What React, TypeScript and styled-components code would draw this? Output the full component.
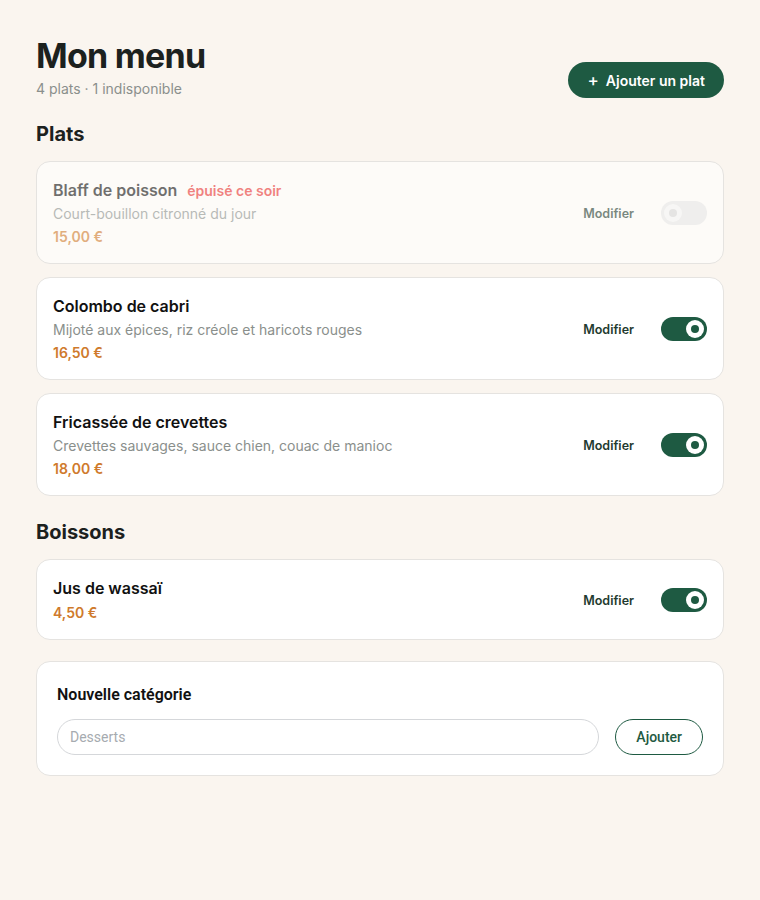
import React, { useState } from 'react'
import styled, { createGlobalStyle } from 'styled-components'

const GlobalStyle = createGlobalStyle`
    body {
        margin: 0;
        background: #faf5ef;
        font-family: Inter, "Noto Sans", sans-serif;
        color: #1c211e;
    }
`

const StyledPage = styled.div`
    padding: 36px 36px 40px;
    display: flex;
    flex-direction: column;
`

const StyledHeader = styled.div`
    display: flex;
    flex-direction: row;
    justify-content: space-between;
    align-items: flex-end;
`

const StyledTitle = styled.h1`
    margin: 0;
    font-size: 34px;
    line-height: 40px;
    font-weight: 700;
    letter-spacing: -0.75px;
    color: #1c211e;
`

const StyledSubtitle = styled.div`
    margin-top: 4px;
    font-size: 14px;
    line-height: 18px;
    color: #8a8f8c;
`

const StyledAddButton = styled.button`
    height: 36px;
    padding: 0 19px;
    border: none;
    border-radius: 18px;
    background: #1e5a42;
    color: #ffffff;
    font-family: Inter, sans-serif;
    font-size: 14px;
    font-weight: 600;
    display: flex;
    align-items: center;
    gap: 7px;
    cursor: pointer;
`

const StyledSectionTitle = styled.h2`
    margin: 24px 0 15px;
    font-size: 20px;
    line-height: 24px;
    font-weight: 700;
    color: #1c211e;
`

const StyledList = styled.div`
    display: flex;
    flex-direction: column;
    gap: 13px;
`

const StyledCard = styled.div<{ $off?: boolean }>`
    display: flex;
    flex-direction: row;
    align-items: center;
    padding: 17px 16px 16px;
    border: 1px solid #e5e3e0;
    border-radius: 14px;
    background: ${p => (p.$off ? '#fdfbf8' : '#ffffff')};
`

const StyledInfo = styled.div<{ $off?: boolean }>`
    flex: 1;
    display: flex;
    flex-direction: column;
    opacity: ${p => (p.$off ? 0.6 : 1)};
`

const StyledNameRow = styled.div`
    display: flex;
    align-items: baseline;
    gap: 10px;
    line-height: 23px;
`

const StyledName = styled.div`
    font-size: 16px;
    font-weight: 600;
    color: #111111;
`

const StyledBadge = styled.span`
    font-size: 14px;
    font-weight: 600;
    color: #e8312f;
`

const StyledDesc = styled.div`
    margin-top: 2px;
    font-size: 14px;
    line-height: 20px;
    color: #8a8f8c;
`

const StyledPrice = styled.div`
    margin-top: 3px;
    font-size: 14px;
    line-height: 20px;
    font-weight: 600;
    color: #cf7a2c;
`

const StyledActions = styled.div<{ $off?: boolean }>`
    display: flex;
    align-items: center;
    gap: 27px;
    opacity: ${p => (p.$off ? 0.6 : 1)};
`

const StyledEdit = styled.button`
    border: none;
    background: none;
    padding: 0;
    font-family: Inter, sans-serif;
    font-size: 12.5px;
    font-weight: 600;
    color: #1f3b30;
    cursor: pointer;
`

const StyledToggle = styled.button<{ $on: boolean }>`
    position: relative;
    width: 46px;
    height: 24px;
    border: none;
    padding: 0;
    border-radius: 12px;
    background: ${p => (p.$on ? '#1e5a42' : '#e6e6e6')};
    cursor: pointer;
`

const StyledKnob = styled.span<{ $on: boolean }>`
    position: absolute;
    top: 3px;
    left: ${p => (p.$on ? '25px' : '3px')};
    width: 18px;
    height: 18px;
    border-radius: 50%;
    background: ${p => (p.$on ? '#ffffff' : '#f4f4f4')};
    display: flex;
    align-items: center;
    justify-content: center;
    &::after {
        content: '';
        width: 8px;
        height: 8px;
        border-radius: 50%;
        background: ${p => (p.$on ? '#1e5a42' : '#d6d6d6')};
    }
`

const StyledNewCard = styled.div`
    margin-top: 21px;
    padding: 23px 20px 20px 20px;
    border: 1px solid #e5e3e0;
    border-radius: 14px;
    background: #ffffff;
    font-family: Roboto, sans-serif;
`

const StyledNewTitle = styled.div`
    font-size: 16px;
    font-weight: 600;
    color: #111111;
    line-height: 20px;
`

const StyledForm = styled.div`
    margin-top: 14px;
    display: flex;
    align-items: center;
    gap: 16px;
`

const StyledInput = styled.input`
    flex: 1;
    height: 36px;
    box-sizing: border-box;
    padding: 0 12px;
    border: 1px solid #d5d7da;
    border-radius: 18px;
    font-family: Roboto, sans-serif;
    font-size: 14px;
    outline: none;
    &::placeholder {
        color: #a6abb0;
    }
`

const StyledOutlineButton = styled.button`
    height: 36px;
    padding: 0 20px;
    border: 1px solid #1e5a42;
    border-radius: 18px;
    background: #ffffff;
    color: #1e5a42;
    font-family: Roboto, sans-serif;
    font-size: 14px;
    font-weight: 500;
    cursor: pointer;
`

interface Dish {
    name: string
    desc?: string
    price: string
    on: boolean
}

const plats: Dish[] = [
    { name: 'Blaff de poisson', desc: 'Court-bouillon citronné du jour', price: '15,00 €', on: false },
    { name: 'Colombo de cabri', desc: 'Mijoté aux épices, riz créole et haricots rouges', price: '16,50 €', on: true },
    { name: 'Fricassée de crevettes', desc: 'Crevettes sauvages, sauce chien, couac de manioc', price: '18,00 €', on: true },
]

const boissons: Dish[] = [{ name: 'Jus de wassaï', price: '4,50 €', on: true }]

const DishItem = (props: { dish: Dish }) => {
    const [on, setOn] = useState(props.dish.on)
    const off = !on
    return (
        <StyledCard $off={off}>
            <StyledInfo $off={off}>
                <StyledNameRow>
                    <StyledName>{props.dish.name}</StyledName>
                    {off && <StyledBadge>épuisé ce soir</StyledBadge>}
                </StyledNameRow>
                {props.dish.desc && <StyledDesc>{props.dish.desc}</StyledDesc>}
                <StyledPrice>{props.dish.price}</StyledPrice>
            </StyledInfo>
            <StyledActions $off={off}>
                <StyledEdit>Modifier</StyledEdit>
                <StyledToggle $on={on} onClick={() => setOn(!on)}>
                    <StyledKnob $on={on} />
                </StyledToggle>
            </StyledActions>
        </StyledCard>
    )
}

const App = () => {
    return (
        <>
            <GlobalStyle />
            <StyledPage>
                <StyledHeader>
                    <div>
                        <StyledTitle>Mon menu</StyledTitle>
                        <StyledSubtitle>4 plats · 1 indisponible</StyledSubtitle>
                    </div>
                    <StyledAddButton>
                        <span style={{ fontSize: 17, fontWeight: 500 }}>+</span> Ajouter un plat
                    </StyledAddButton>
                </StyledHeader>

                <StyledSectionTitle>Plats</StyledSectionTitle>
                <StyledList>
                    {plats.map(d => (
                        <DishItem key={d.name} dish={d} />
                    ))}
                </StyledList>

                <StyledSectionTitle>Boissons</StyledSectionTitle>
                <StyledList>
                    {boissons.map(d => (
                        <DishItem key={d.name} dish={d} />
                    ))}
                </StyledList>

                <StyledNewCard>
                    <StyledNewTitle>Nouvelle catégorie</StyledNewTitle>
                    <StyledForm>
                        <StyledInput placeholder="Desserts" />
                        <StyledOutlineButton>Ajouter</StyledOutlineButton>
                    </StyledForm>
                </StyledNewCard>
            </StyledPage>
        </>
    )
}

export default App
